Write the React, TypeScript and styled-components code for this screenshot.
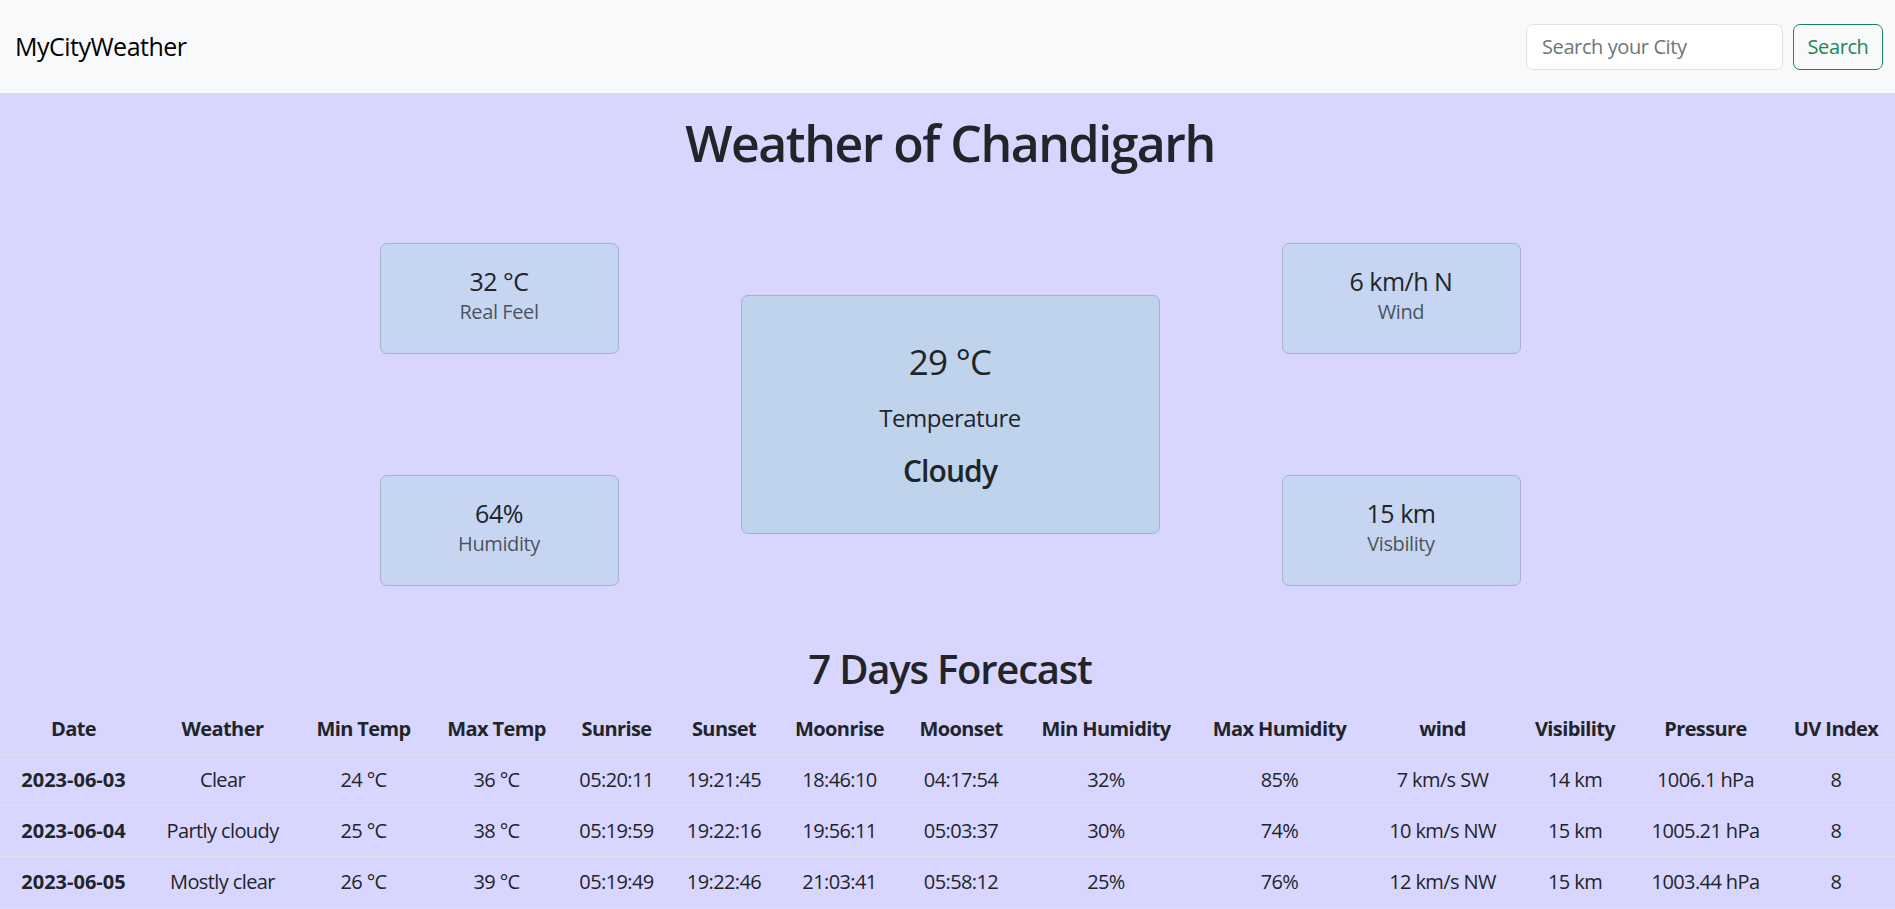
import React from "react";
import styled, { createGlobalStyle } from "styled-components";

const GlobalStyle = createGlobalStyle`
  html, body {
    margin: 0;
    padding: 0;
    background: #d8d6ff;
  }
  body {
    font-family: "Open Sans", "Noto Sans", "Liberation Sans", sans-serif;
    font-size: 20px;
    line-height: 1.5;
    color: #212529;
    min-height: 100vh;
  }
  * { box-sizing: border-box; }
`;

const Navbar = styled.nav`
  display: flex;
  align-items: center;
  justify-content: space-between;
  height: 93px;
  padding: 0 12px 0 15px;
  background: #f8f9fa;
`;

const Brand = styled.a`
  font-size: 25px;
  line-height: 1.5;
  color: #000;
  text-decoration: none;
  letter-spacing: -0.02em;
`;

const SearchForm = styled.form`
  display: flex;
  align-items: center;
  gap: 10px;
`;

const SearchInput = styled.input`
  width: 257px;
  height: 46px;
  padding: 0 15px;
  font-family: inherit;
  font-size: 20px;
  letter-spacing: -0.02em;
  color: #212529;
  background: #fff;
  border: 1px solid #dee2e6;
  border-radius: 7px;
  outline: none;
  &::placeholder { color: #6c757d; }
`;

const SearchButton = styled.button`
  width: 90px;
  height: 46px;
  font-family: inherit;
  font-size: 20px;
  letter-spacing: -0.02em;
  color: #198754;
  background: transparent;
  border: 1px solid #198754;
  border-radius: 7px;
  cursor: pointer;
`;

const Main = styled.main`
  display: flex;
  flex-direction: column;
  align-items: center;
`;

const Hero = styled.section`
  display: flex;
  flex-direction: column;
  align-items: center;
  padding-left: 5px;
`;

const Title = styled.h1`
  margin: 20px 0 0;
  font-size: 50px;
  line-height: 60px;
  font-weight: 600;
  letter-spacing: -0.03em;
`;

const CardsRow = styled.div`
  display: flex;
  align-items: center;
  justify-content: center;
  gap: 122px;
  margin-top: 70px;
`;

const SideColumn = styled.div`
  display: flex;
  flex-direction: column;
  gap: 121px;
`;

const Card = styled.div<{ $main?: boolean }>`
  display: flex;
  flex-direction: column;
  align-items: center;
  justify-content: center;
  width: ${(p) => (p.$main ? "419px" : "239px")};
  height: ${(p) => (p.$main ? "239px" : "111px")};
  padding-bottom: ${(p) => (p.$main ? "0" : "6px")};
  background: ${(p) => (p.$main ? "#bfd4ec" : "#c6d5f1")};
  border: 1px solid #a7b1cc;
  border-radius: 7px;
  text-align: center;
`;

const StatValue = styled.div`
  font-size: 25px;
  line-height: 32px;
  font-weight: 500;
  letter-spacing: -0.02em;
`;

const StatLabel = styled.div`
  font-size: 20px;
  line-height: 30px;
  color: rgba(33, 37, 41, 0.75);
  letter-spacing: -0.02em;
`;

const BigTemp = styled.div`
  font-size: 35px;
  line-height: 42px;
  font-weight: 400;
  letter-spacing: -0.02em;
`;

const MainLabel = styled.div`
  margin-top: 20px;
  font-size: 24px;
  line-height: 30px;
  font-weight: 500;
  letter-spacing: -0.02em;
`;

const Condition = styled.div`
  margin-top: 20px;
  font-size: 30px;
  line-height: 36px;
  font-weight: 600;
  letter-spacing: -0.03em;
`;

const Forecast = styled.section`
  display: flex;
  flex-direction: column;
  align-items: center;
  width: 100%;
`;

const SectionTitle = styled.h2`
  margin: 59px 0 11px 5px;
  font-size: 40px;
  line-height: 48px;
  font-weight: 600;
  letter-spacing: -0.03em;
`;

const Table = styled.table`
  width: 100%;
  table-layout: fixed;
  border-collapse: collapse;
  text-align: center;
`;

const Col = styled.col<{ $w: number }>`
  width: ${(p) => p.$w}px;
`;

const HeadCell = styled.th`
  padding: 10px 0;
  font-size: 20px;
  line-height: 30px;
  font-weight: 700;
  letter-spacing: -0.03em;
  white-space: nowrap;
  border-bottom: 1px solid #dee2e6;
`;

const Cell = styled.td<{ $bold?: boolean }>`
  padding: 10px 0;
  font-size: 20px;
  line-height: 30px;
  font-weight: ${(p) => (p.$bold ? 700 : 400)};
  letter-spacing: ${(p) => (p.$bold ? "0" : "-0.03em")};
  white-space: nowrap;
  border-bottom: 1px solid #dee2e6;
`;

const columns = [
  { label: "Date", key: "date", w: 147 },
  { label: "Weather", key: "weather", w: 151 },
  { label: "Min Temp", key: "min", w: 131 },
  { label: "Max Temp", key: "max", w: 135 },
  { label: "Sunrise", key: "sunrise", w: 105 },
  { label: "Sunset", key: "sunset", w: 110 },
  { label: "Moonrise", key: "moonrise", w: 121 },
  { label: "Moonset", key: "moonset", w: 122 },
  { label: "Min Humidity", key: "minH", w: 168 },
  { label: "Max Humidity", key: "maxH", w: 179 },
  { label: "wind", key: "wind", w: 147 },
  { label: "Visibility", key: "vis", w: 118 },
  { label: "Pressure", key: "pressure", w: 143 },
  { label: "UV Index", key: "uv", w: 118 },
] as const;

type Day = Record<(typeof columns)[number]["key"], string>;

const forecast: Day[] = [
  {
    date: "2023-06-03", weather: "Clear", min: "24 °C", max: "36 °C",
    sunrise: "05:20:11", sunset: "19:21:45", moonrise: "18:46:10", moonset: "04:17:54",
    minH: "32%", maxH: "85%", wind: "7 km/s SW", vis: "14 km", pressure: "1006.1 hPa", uv: "8",
  },
  {
    date: "2023-06-04", weather: "Partly cloudy", min: "25 °C", max: "38 °C",
    sunrise: "05:19:59", sunset: "19:22:16", moonrise: "19:56:11", moonset: "05:03:37",
    minH: "30%", maxH: "74%", wind: "10 km/s NW", vis: "15 km", pressure: "1005.21 hPa", uv: "8",
  },
  {
    date: "2023-06-05", weather: "Mostly clear", min: "26 °C", max: "39 °C",
    sunrise: "05:19:49", sunset: "19:22:46", moonrise: "21:03:41", moonset: "05:58:12",
    minH: "25%", maxH: "76%", wind: "12 km/s NW", vis: "15 km", pressure: "1003.44 hPa", uv: "8",
  },
];

function StatCard({ value, label }: { value: string; label: string }) {
  return (
    <Card>
      <StatValue>{value}</StatValue>
      <StatLabel>{label}</StatLabel>
    </Card>
  );
}

export default function App() {
  return (
    <>
      <GlobalStyle />
      <Navbar>
        <Brand href="#">MyCityWeather</Brand>
        <SearchForm onSubmit={(e) => e.preventDefault()}>
          <SearchInput type="search" placeholder="Search your City" />
          <SearchButton type="submit">Search</SearchButton>
        </SearchForm>
      </Navbar>
      <Main>
        <Hero>
          <Title>Weather of Chandigarh</Title>
          <CardsRow>
            <SideColumn>
              <StatCard value="32 °C" label="Real Feel" />
              <StatCard value="64%" label="Humidity" />
            </SideColumn>
            <Card $main>
              <BigTemp>29 °C</BigTemp>
              <MainLabel>Temperature</MainLabel>
              <Condition>Cloudy</Condition>
            </Card>
            <SideColumn>
              <StatCard value="6 km/h N" label="Wind" />
              <StatCard value="15 km" label="Visbility" />
            </SideColumn>
          </CardsRow>
        </Hero>
        <Forecast>
          <SectionTitle>7 Days Forecast</SectionTitle>
          <Table>
            <colgroup>
              {columns.map((c) => (
                <Col key={c.key} $w={c.w} />
              ))}
            </colgroup>
            <thead>
              <tr>
                {columns.map((c) => (
                  <HeadCell key={c.key}>{c.label}</HeadCell>
                ))}
              </tr>
            </thead>
            <tbody>
              {forecast.map((d) => (
                <tr key={d.date}>
                  {columns.map((c) => (
                    <Cell key={c.key} $bold={c.key === "date"}>
                      {d[c.key]}
                    </Cell>
                  ))}
                </tr>
              ))}
            </tbody>
          </Table>
        </Forecast>
      </Main>
    </>
  );
}
